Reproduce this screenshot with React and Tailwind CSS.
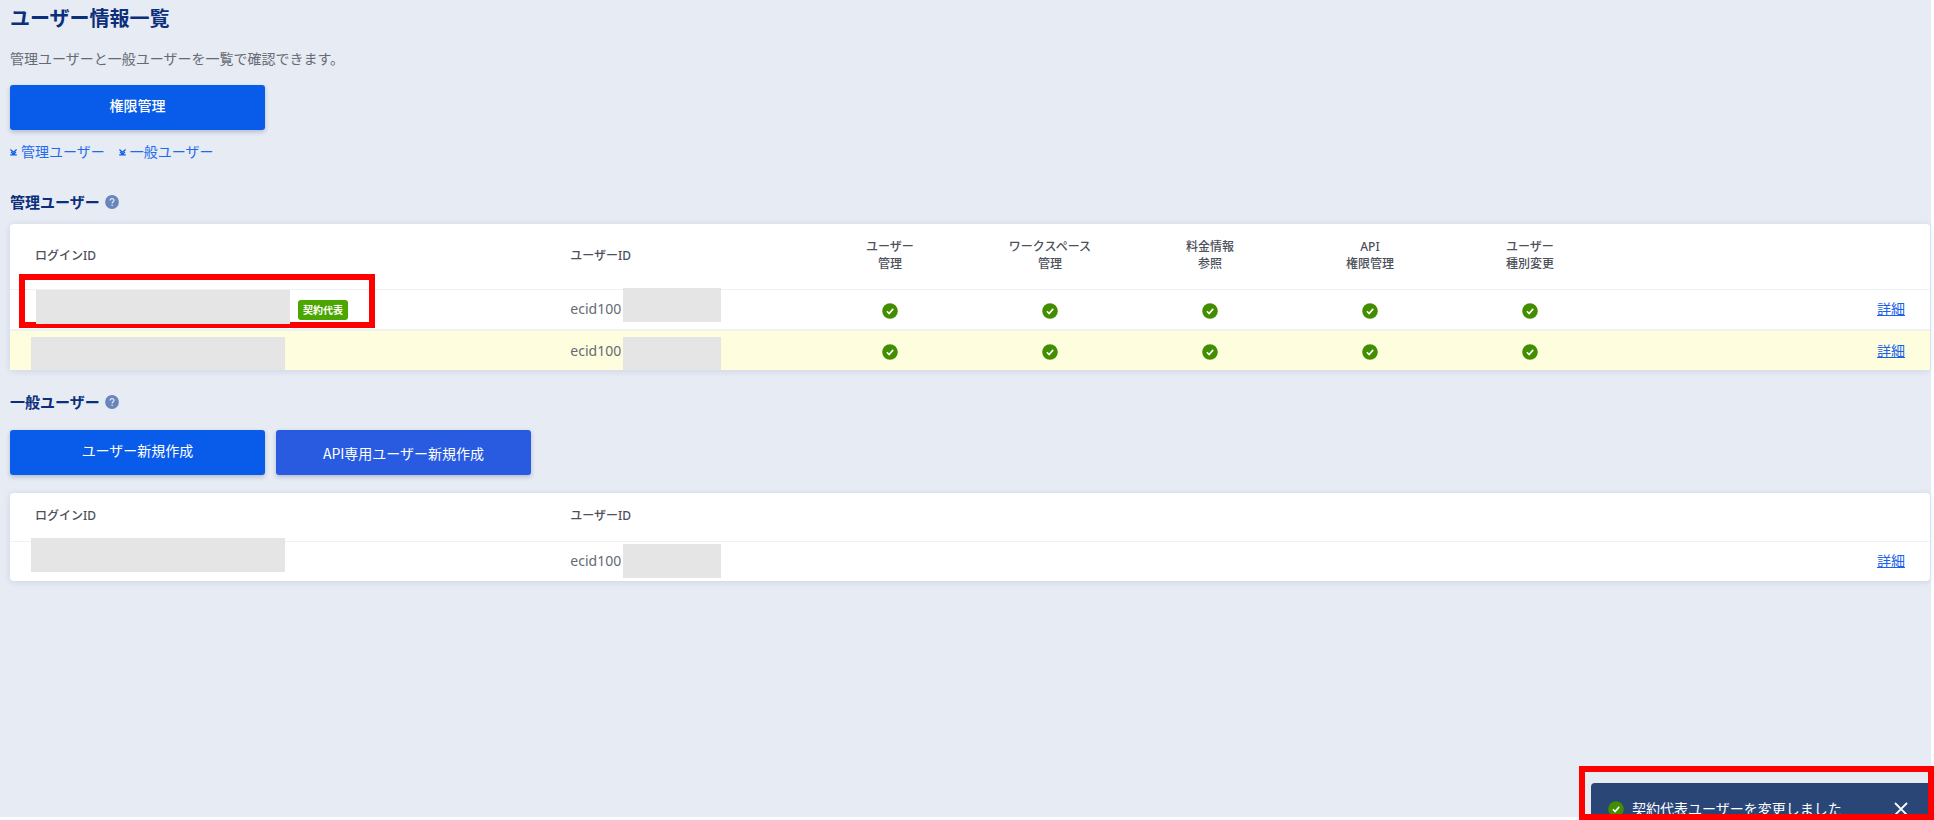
const permissions = [
    ['ユーザー', '管理'],
    ['ワークスペース', '管理'],
    ['料金情報', '参照'],
    ['API', '権限管理'],
    ['ユーザー', '種別変更'],
];

const CheckIcon = () => (
    <svg viewBox="0 0 16 16" className="inline-block size-4" role="img" aria-label="許可">
        <circle cx="8" cy="8" r="7.8" fill="#438e00" />
        <path d="M4.9 8.3l2.2 2.3 4.1-4.7" fill="none" stroke="#fff" strokeWidth="1.6" />
    </svg>
);

const HelpIcon = () => (
    <svg viewBox="0 0 14 14" className="size-3.5" aria-hidden="true">
        <circle cx="7" cy="7" r="6.9" fill="#6885bd" />
        <path
            d="M5.1 5.5c0-2.5 3.9-2.4 3.9-.2 0 1.4-1.9 1.5-1.9 3.1"
            fill="none"
            stroke="#e6ebf4"
            strokeWidth="1.2"
        />
        <circle cx="7.1" cy="10.2" r=".8" fill="#e6ebf4" />
    </svg>
);

const JumpIcon = () => (
    <svg viewBox="0 0 7 7" className="size-[7px]" aria-hidden="true">
        <path d="M.4.5l3.1 2.8L6.6.5M1 3l2.5 2.2L6 3M.2 5.8h6.600" fill="none" stroke="#0a5ce8" strokeWidth="1.2" />
    </svg>
);

const SectionHeading = ({ id, children }) => (
    <h2 id={id} className="flex items-center gap-[5px] text-[15px] leading-6 font-bold text-[#0b2f7a]">
        {children}
        <HelpIcon />
    </h2>
);

const ActionButton = ({ children, className }) => (
    <button
        type="button"
        className={`h-[45px] w-[255px] rounded-[3px] text-sm text-white shadow-[0_2px_4px_rgba(60,80,120,0.3)] ${className}`}
    >
        {children}
    </button>
);

// Masked part of a login or user id, laid over the cell
const Mask = ({ className }) => <span className={`absolute z-20 bg-[#e5e5e5] ${className}`} />;

const DetailLink = () => (
    <a href="#detail" className="text-sm text-[#1a62ea] underline">
        詳細
    </a>
);

const App = () => {
    return (
        <div className="relative flex min-h-screen flex-col bg-white pr-[3px] pb-[3px] font-['Noto_Sans','Noto_Sans_CJK_JP',sans-serif] text-[#666a73]">
            <main className="flex-1 bg-[#e6ebf4] pt-[3px] pr-px pl-2.5">
                <h1 className="text-xl leading-8 font-bold text-[#0b2f7a]">ユーザー情報一覧</h1>
                <p className="mt-3.5 text-sm leading-5">管理ユーザーと一般ユーザーを一覧で確認できます。</p>
                <ActionButton className="mt-4 bg-[#095ce9] pb-1 font-medium">権限管理</ActionButton>

                <nav className="mt-3 flex gap-3.5 text-sm leading-5 text-[#1f6bea]">
                    <a href="#admin" className="flex items-center gap-1">
                        <JumpIcon />
                        管理ユーザー
                    </a>
                    <a href="#general" className="flex items-center gap-1">
                        <JumpIcon />
                        一般ユーザー
                    </a>
                </nav>

                <section className="mt-7">
                    <SectionHeading id="admin">管理ユーザー</SectionHeading>
                    <div className="mt-2.5 rounded-sm bg-white shadow-[0_1px_6px_rgba(60,80,130,0.14)]">
                        <table className="w-full table-fixed text-left text-sm">
                            <thead>
                                <tr className="h-[65px] border-b border-[#eef1f7] text-xs text-[#4c505a]">
                                    <th className="w-5/18 pl-[25px] font-medium">ログインID</th>
                                    <th className="w-5/36 pl-[27px] font-medium">ユーザーID</th>
                                    {permissions.map(([top, bottom]) => (
                                        <th key={top + bottom} className="w-1/12 pb-0.5 text-center leading-[17px] font-medium">
                                            {top}
                                            <br />
                                            {bottom}
                                        </th>
                                    ))}
                                    <th aria-label="詳細" />
                                </tr>
                            </thead>
                            <tbody>
                                <tr className="h-[41px] border-b-2 border-[#eef2f5]">
                                    <td className="relative">
                                        <Mask className="top-0 left-[26px] h-[34px] w-[254px]" />
                                        <span className="absolute top-2.5 left-72 rounded-[3px] bg-[#4ba600] px-[5px] text-[10px] leading-5 font-bold text-white">
                                            契約代表
                                        </span>
                                        <span className="absolute -top-4 left-[9px] z-10 h-[54px] w-[356px] border-6 border-[#fe0000]" />
                                    </td>
                                    <td className="relative pl-[27px]">
                                        ecid100
                                        <Mask className="-top-0.5 left-20 h-[34px] w-[98px]" />
                                    </td>
                                    {permissions.map(([top, bottom]) => (
                                        <td key={top + bottom} className="text-center">
                                            <CheckIcon />
                                        </td>
                                    ))}
                                    <td className="pr-[25px] text-right">
                                        <DetailLink />
                                    </td>
                                </tr>
                                <tr className="h-10 bg-[#fefedf]">
                                    <td className="relative">
                                        <Mask className="bottom-0 left-[21px] h-[33px] w-[254px]" />
                                    </td>
                                    <td className="relative pl-[27px]">
                                        ecid100
                                        <Mask className="bottom-0 left-20 h-[33px] w-[98px]" />
                                    </td>
                                    {permissions.map(([top, bottom]) => (
                                        <td key={top + bottom} className="text-center">
                                            <CheckIcon />
                                        </td>
                                    ))}
                                    <td className="pr-[25px] text-right">
                                        <DetailLink />
                                    </td>
                                </tr>
                            </tbody>
                        </table>
                    </div>
                </section>

                <section className="mt-5">
                    <SectionHeading id="general">一般ユーザー</SectionHeading>
                    <div className="mt-4 flex gap-[11px]">
                        <ActionButton className="bg-[#095ce9] pb-1">ユーザー新規作成</ActionButton>
                        <ActionButton className="bg-[#295be0] font-['Noto_Sans_CJK_JP',sans-serif]">API専用ユーザー新規作成</ActionButton>
                    </div>
                    <div className="mt-[18px] rounded-sm bg-white shadow-[0_1px_6px_rgba(60,80,130,0.14)]">
                        <table className="w-full table-fixed text-left text-sm">
                            <thead>
                                <tr className="h-12 border-b border-[#eef1f7] text-xs text-[#4c505a]">
                                    <th className="w-5/18 pb-0.5 pl-[25px] font-medium">ログインID</th>
                                    <th className="w-5/36 pb-0.5 pl-[27px] font-medium">ユーザーID</th>
                                    <th aria-label="詳細" />
                                </tr>
                            </thead>
                            <tbody>
                                <tr className="h-10">
                                    <td className="relative">
                                        <Mask className="-top-1 left-[21px] h-[34px] w-[254px]" />
                                    </td>
                                    <td className="relative pl-[27px]">
                                        ecid100
                                        <Mask className="top-0.5 left-20 h-[34px] w-[98px]" />
                                    </td>
                                    <td className="pr-[25px] text-right">
                                        <DetailLink />
                                    </td>
                                </tr>
                            </tbody>
                        </table>
                    </div>
                </section>
            </main>

            {/* Toast, cut off by the bottom edge */}
            <div className="absolute right-0 bottom-0 h-[54px] w-[355px] overflow-hidden border-6 border-[#fe0000] pt-[11px] pl-1.5">
                <div role="status" className="flex h-13 items-center rounded-tl-sm bg-[#294677] pr-5 pl-[17px] text-sm text-white">
                    <CheckIcon />
                    <span className="ml-2">契約代表ユーザーを変更しました</span>
                    <button type="button" aria-label="閉じる" className="ml-auto">
                        <svg viewBox="0 0 14 14" className="size-3.5" aria-hidden="true">
                            <path d="M1 1l12 12M13 1L1 13" stroke="#fff" strokeWidth="1.8" />
                        </svg>
                    </button>
                </div>
            </div>
        </div>
    );
};

export default App;
